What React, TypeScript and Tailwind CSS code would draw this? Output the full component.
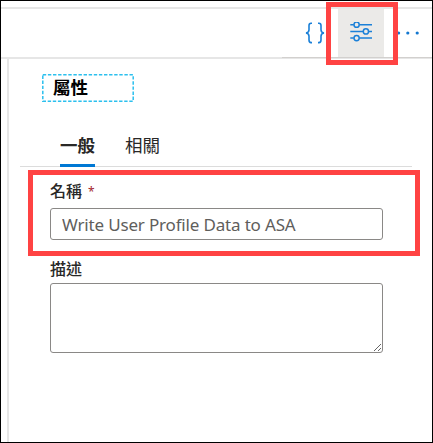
function BracesIcon() {
  return (
    <svg width="20" height="22" viewBox="0 0 20 22" fill="none" stroke="#1b80d8" strokeWidth="1.6">
      <path d="M7 1.2H6Q4 1.2 4 3.6V7.8Q4 10.6 1 11Q4 11.4 4 14.2V18Q4 20.6 6 20.6H7" />
      <path d="M13 1.2H14Q16 1.2 16 3.6V7.8Q16 10.6 19 11Q16 11.4 16 14.2V18Q16 20.6 14 20.6H13" />
    </svg>
  );
}

function SlidersIcon() {
  return (
    <svg width="24" height="22" viewBox="0 0 24 22" fill="none" stroke="#1b80d8" strokeWidth="1.5">
      <path d="M1.3 2.7H4.8M10.4 2.7H23M1.3 9.4H14.1M19.7 9.4H23M1.3 16.1H4.8M10.4 16.1H23" />
      <circle cx="7.6" cy="2.7" r="2.6" />
      <circle cx="16.9" cy="9.4" r="2.6" />
      <circle cx="7.6" cy="16.1" r="2.6" />
    </svg>
  );
}

function MoreIcon() {
  return (
    <svg width="24" height="6" viewBox="0 0 24 6" fill="#1478d0">
      <circle cx="2.6" cy="3" r="1.6" />
      <circle cx="11.8" cy="3" r="1.6" />
      <circle cx="21.2" cy="3" r="1.6" />
    </svg>
  );
}

function DashedFrame() {
  return (
    <svg className="absolute inset-0" width="92" height="28" viewBox="0 0 92 28" fill="none">
      <rect
        x="0.8"
        y="0.8"
        width="90.4"
        height="26.4"
        stroke="#2cc0ee"
        strokeWidth="1.5"
        strokeDasharray="3.4 1.7"
      />
    </svg>
  );
}

export default function App() {
  return (
    <div className="relative flex h-[443px] w-[433px] flex-col overflow-hidden border border-black bg-white pt-1.5 font-['Noto_Sans','Noto_Sans_CJK_TC',sans-serif] text-[#292827]">
      <header className="flex h-[52px] shrink-0 justify-end border-y-2 border-[#e6e6e6]">
        <div className="flex h-[49px] w-[150px] border-b border-[#d2d0ce]">
          <button className="flex w-[56px] items-center pl-[23px]">
            <BracesIcon />
          </button>
          <button className="flex w-[46px] items-center justify-center bg-[#ebeae8]">
            <SlidersIcon />
          </button>
          <button className="flex w-12 items-center pl-3">
            <MoreIcon />
          </button>
        </div>
      </header>

      <main className="ml-1.5 flex grow flex-col border-l-2 border-[#e6e6e6] pl-[11px]">
        <h1 className="relative mt-[15px] ml-[22px] h-7 w-[92px] pl-[11px] font-['Noto_Sans_CJK_TC',sans-serif] text-[17.5px] leading-[26px] font-bold text-black">
          <DashedFrame />
          屬性
        </h1>

        <nav className="mt-[28px] flex h-[37px] w-[392px] gap-[30px] border-b border-[#dcdcdc] pl-10 font-['Noto_Sans_CJK_TC',sans-serif] text-[17.5px] leading-[30px]">
          <button className="flex h-[37px] items-start border-b-[3px] border-[#0078d4] font-bold">一般</button>
          <button className="flex h-[37px] items-start">相關</button>
        </nav>

        <form className="ml-[30px] flex w-[333px] flex-col">
          <label className="mt-[12px] flex h-[23px] gap-[6px] font-['Noto_Sans_CJK_TC',sans-serif] text-base leading-[23px] font-medium">
            名稱
            <span className="font-['Noto_Sans',sans-serif] text-xs leading-[26px] font-normal text-[#a4262c]">*</span>
          </label>
          <input
            className="mt-[6px] h-8 rounded-[3px] border border-[#8a8886] px-[11px] text-[17px] tracking-[-0.17px] text-[#605e5c] outline-none"
            defaultValue="Write User Profile Data to ASA"
          />
          <label className="mt-[17px] h-[23px] font-['Noto_Sans_CJK_TC',sans-serif] text-base leading-[23px] font-medium">
            描述
          </label>
          <textarea className="mt-[3px] h-[70px] resize rounded-[3px] border border-[#8a8886] outline-none" />
        </form>
      </main>

      <div className="pointer-events-none absolute top-px left-[325px] h-[63px] w-[72px] border-5 border-[#ff4343]" />
      <div className="pointer-events-none absolute top-[169px] left-[27px] h-[86px] w-[392px] border-5 border-[#ff4343]" />
    </div>
  );
}
